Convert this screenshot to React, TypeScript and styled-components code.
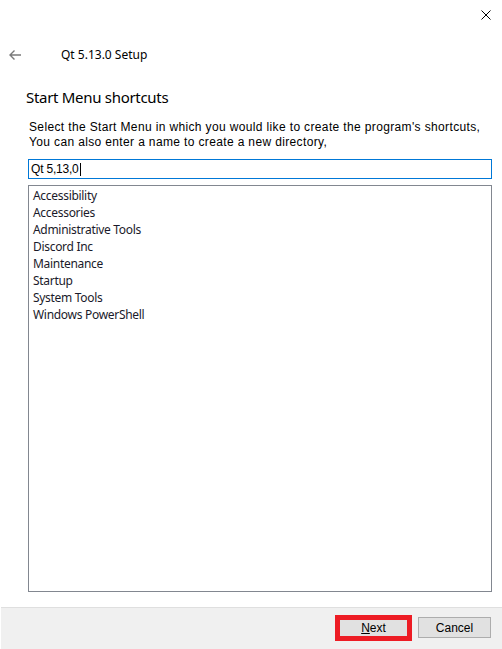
import React from "react";
import styled, { createGlobalStyle } from "styled-components";

const GlobalStyle = createGlobalStyle`
  html, body {
    margin: 0;
    padding: 0;
    background: #ffffff;
  }
  body {
    font-family: "Noto Sans", "Liberation Sans", sans-serif;
    color: #000;
  }
`;

const Window = styled.div`
  width: 502px;
  height: 649px;
  display: flex;
  flex-direction: column;
  background: #ffffff;
  overflow: hidden;
`;

const TopBar = styled.div`
  height: 30px;
  display: flex;
  align-items: center;
  justify-content: flex-end;
  padding-right: 11px;
`;

const NavRow = styled.div`
  height: 46px;
  padding-top: 2px;
  display: flex;
  align-items: center;
  padding-left: 9px;
  gap: 40px;
`;

const Title = styled.span`
  font-size: 12px;
  line-height: 16px;
  color: #000;
`;

const Body = styled.div`
  flex: 1;
  display: flex;
  flex-direction: column;
  padding: 9px 10px 15px 28px;
  min-height: 0;
`;

const Heading = styled.h1`
  margin: 0 0 0 -2px;
  font-size: 15px;
  line-height: 20px;
  font-weight: 400;
  letter-spacing: -0.3px;
  color: #000;
`;

const Description = styled.p`
  margin: 13px 0 0 1px;
  font-family: "Liberation Sans", Arial, sans-serif;
  font-size: 12px;
  line-height: 15px;
  letter-spacing: 0.36px;
  color: #000;
`;

const PathField = styled.div`
  margin-top: 9px;
  height: 20px;
  box-sizing: border-box;
  border: 1px solid #0078d7;
  display: flex;
  align-items: center;
  padding-left: 2px;
  font-family: "Liberation Sans", Arial, sans-serif;
  font-size: 12px;
  letter-spacing: -0.2px;
  color: #000;
`;

const Caret = styled.span`
  display: inline-block;
  width: 1px;
  height: 13px;
  background: #000;
  margin-left: 1px;
`;

const FolderList = styled.ul`
  flex: 1;
  margin: 6px 0 0 0;
  padding: 1px 0 0 0;
  list-style: none;
  border: 1px solid #828790;
  box-sizing: border-box;
`;

const FolderItem = styled.li`
  font-size: 12px;
  line-height: 17px;
  letter-spacing: -0.3px;
  padding-left: 4px;
  color: #1a1a2a;
`;

const Footer = styled.div`
  height: 42px;
  box-sizing: border-box;
  margin-left: 1px;
  border-top: 1px solid #dfdfdf;
  background: #f0f0f0;
  display: flex;
  justify-content: flex-end;
  align-items: flex-start;
  padding: 9px 11px 0 0;
  gap: 8px;
`;

const ButtonSlot = styled.div<{ $highlight?: boolean }>`
  position: relative;
  ${(p) =>
    p.$highlight &&
    `
    &::after {
      content: "";
      position: absolute;
      top: -2px;
      left: -2px;
      right: -2px;
      bottom: -3px;
      border: 5px solid #ed1c24;
      pointer-events: none;
    }
  `}
`;

const DialogButton = styled.button`
  width: 73px;
  height: 21px;
  box-sizing: border-box;
  border: 1px solid #adadad;
  background: #e1e1e1;
  font-family: "Liberation Sans", Arial, sans-serif;
  font-size: 12px;
  color: #000;
  padding: 0;
  display: flex;
  align-items: center;
  justify-content: center;
`;

const folders = [
  "Accessibility",
  "Accessories",
  "Administrative Tools",
  "Discord Inc",
  "Maintenance",
  "Startup",
  "System Tools",
  "Windows PowerShell",
];

const App: React.FC = () => {
  return (
    <Window>
      <GlobalStyle />
      <TopBar>
        <svg width="10" height="10" viewBox="0 0 10 10">
          <path d="M0.5 0.5 L9.5 9.5 M9.5 0.5 L0.5 9.5" stroke="#000" strokeWidth="1" fill="none" />
        </svg>
      </TopBar>
      <NavRow>
        <svg width="12" height="10" viewBox="0 0 12 10">
          <path d="M12 5 H1 M5.5 0.5 L1 5 L5.5 9.5" stroke="#7a7a7a" strokeWidth="1.4" fill="none" />
        </svg>
        <Title>Qt 5.13.0 Setup</Title>
      </NavRow>
      <Body>
        <Heading>Start Menu shortcuts</Heading>
        <Description>
          Select the Start Menu in which you would like to create the program's shortcuts,
          <br />
          You can also enter a name to create a new directory,
        </Description>
        <PathField>
          Qt 5,13,0
          <Caret />
        </PathField>
        <FolderList>
          {folders.map((f) => (
            <FolderItem key={f}>{f}</FolderItem>
          ))}
        </FolderList>
      </Body>
      <Footer>
        <ButtonSlot $highlight>
          <DialogButton>
            <u>N</u>ext
          </DialogButton>
        </ButtonSlot>
        <ButtonSlot>
          <DialogButton>Cancel</DialogButton>
        </ButtonSlot>
      </Footer>
    </Window>
  );
};

export default App;
